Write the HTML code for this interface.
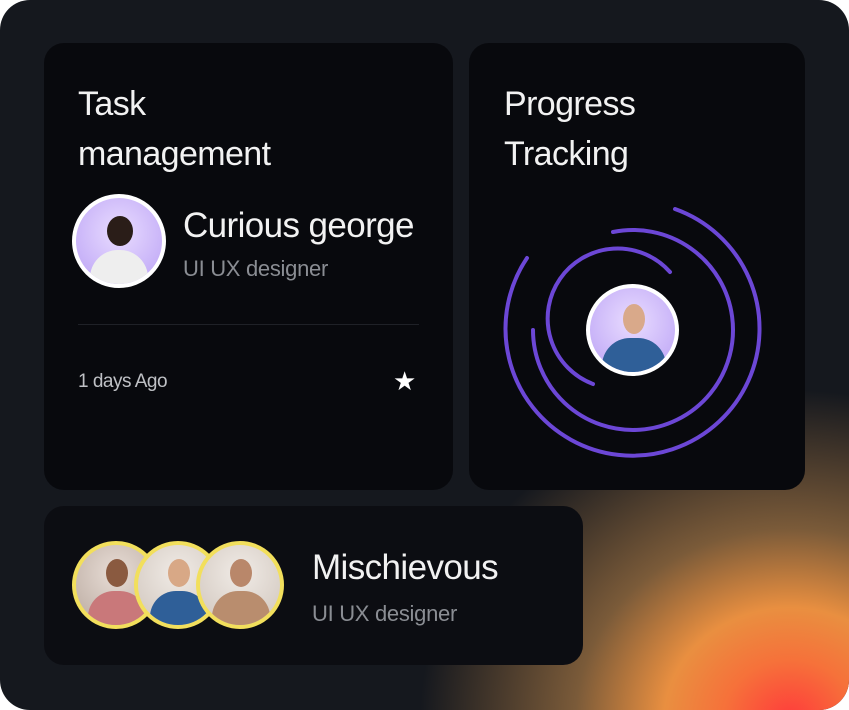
<!DOCTYPE html><html><head><style>
body{margin:0;width:849px;height:710px;background:#fff;overflow:hidden;font-family:"Liberation Sans",sans-serif}
.wrap{position:absolute;left:0;top:0;width:849px;height:710px;border-radius:30px;background:#15181e;overflow:hidden}
.glow{position:absolute;left:0;top:0;width:849px;height:710px;background:radial-gradient(ellipse 370px 330px at 790px 720px,#ff3b3b 0%,#f6713a 18%,#e98f40 34%,rgba(190,135,75,.6) 58%,rgba(21,24,30,0) 100%)}
.card{position:absolute;background:#08090d;border-radius:20px}
.t{color:#f2f2f2;font-size:34px;line-height:50px;letter-spacing:-.6px}
.av{position:absolute;border-radius:50%;border:4px solid #fff;box-sizing:border-box;background:radial-gradient(circle at 50% 40%,#e9dcff,#b9a0f5);overflow:hidden}
.sub{color:#8a8d93;font-size:22px;letter-spacing:-.3px}
.y{border-color:#f2df5c}
</style></head><body><div class="wrap">
<div class="glow"></div>
<div class="card" style="left:44px;top:43px;width:409px;height:447px">
<div class="t" style="position:absolute;left:34px;top:36px">Task<br>management</div>
<div class="av" style="left:28px;top:151px;width:94px;height:94px"><div style="position:absolute;left:31px;top:18px;width:26px;height:30px;border-radius:50%;background:#2a1d18"></div><div style="position:absolute;left:14px;top:52px;width:58px;height:40px;border-radius:28px 28px 0 0;background:#eee"></div></div>
<div style="position:absolute;left:139px;top:163px;color:#f2f2f2;font-size:35px;letter-spacing:-.6px">Curious george</div>
<div class="sub" style="position:absolute;left:139px;top:213px">UI UX designer</div>
<div style="position:absolute;left:34px;top:281px;width:341px;height:1px;background:#1f2127"></div>
<div style="position:absolute;left:34px;top:328px;color:#bfc1c5;font-size:19px;letter-spacing:-.5px">1 days Ago</div>
<div style="position:absolute;left:349px;top:323px;color:#fff;font-size:26px">★</div>
</div>
<div class="card" style="left:469px;top:43px;width:336px;height:447px">
<div class="t" style="position:absolute;left:35px;top:36px">Progress<br>Tracking</div>
</div>
<svg style="position:absolute;left:0;top:0" width="849" height="710" fill="none" stroke="#6c47d6" stroke-width="4" stroke-linecap="round">
<path d="M675 209 A127 127 0 1 1 527 258"/>
<path d="M613 232 A100 100 0 1 1 533 330"/>
<path d="M670 272 A70 70 0 1 0 593 384"/>
</svg>
<div class="av" style="left:586px;top:284px;width:93px;height:92px"><div style="position:absolute;left:33px;top:16px;width:22px;height:30px;border-radius:50%;background:#d9a98a"></div><div style="position:absolute;left:12px;top:50px;width:64px;height:40px;border-radius:28px 28px 0 0;background:#2f5f98"></div></div>
<div class="card" style="left:44px;top:506px;width:539px;height:159px;background:#0c0d12">
<div style="position:absolute;left:268px;top:42px;color:#f2f2f2;font-size:35px;letter-spacing:-.6px">Mischievous</div>
<div class="sub" style="position:absolute;left:268px;top:95px">UI UX designer</div>
</div>
<div class="av y" style="left:72px;top:541px;width:88px;height:88px;background:radial-gradient(circle at 50% 35%,#e8ddd6,#b8a89e)"><div style="position:absolute;left:30px;top:14px;width:22px;height:28px;border-radius:50%;background:#8a5a40"></div><div style="position:absolute;left:12px;top:46px;width:58px;height:36px;border-radius:26px 26px 0 0;background:#c9787a"></div></div>
<div class="av y" style="left:134px;top:541px;width:88px;height:88px;background:radial-gradient(circle at 50% 35%,#f0ebe6,#cfc4bb)"><div style="position:absolute;left:30px;top:14px;width:22px;height:28px;border-radius:50%;background:#d8a886"></div><div style="position:absolute;left:12px;top:46px;width:58px;height:36px;border-radius:26px 26px 0 0;background:#2f5f98"></div></div>
<div class="av y" style="left:196px;top:541px;width:88px;height:88px;background:radial-gradient(circle at 50% 35%,#f0ebe6,#cfc4bb)"><div style="position:absolute;left:30px;top:14px;width:22px;height:28px;border-radius:50%;background:#b9876a"></div><div style="position:absolute;left:12px;top:46px;width:58px;height:36px;border-radius:26px 26px 0 0;background:#b98d6e"></div></div>
</div></body></html>
